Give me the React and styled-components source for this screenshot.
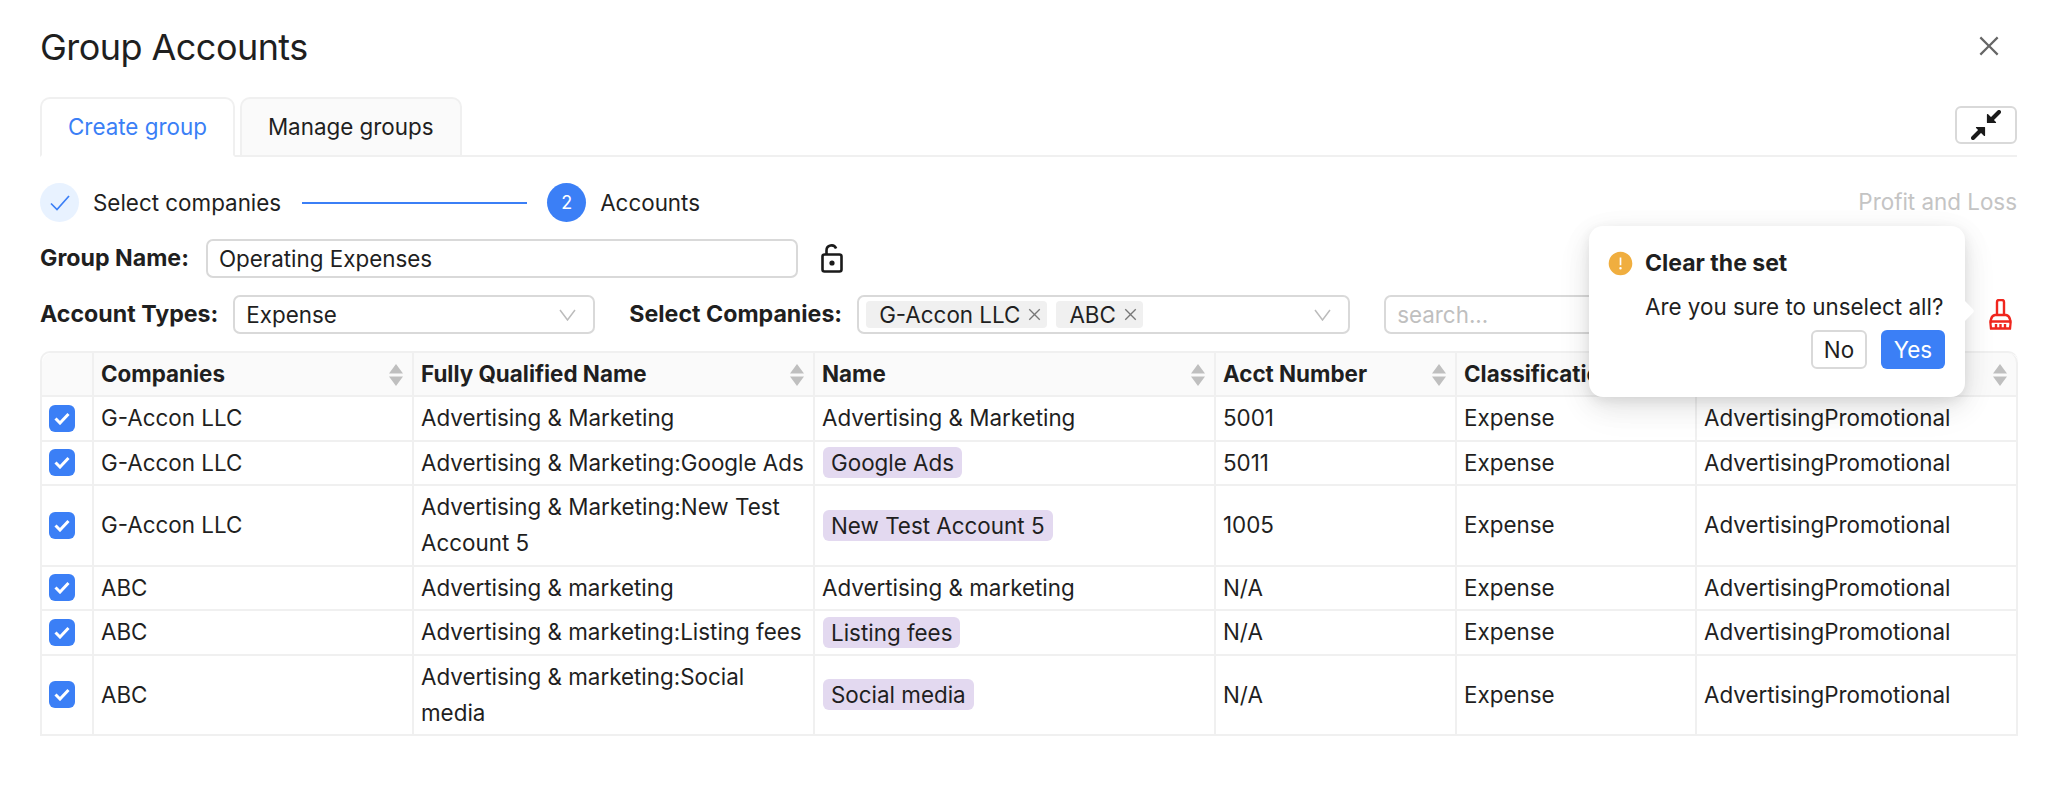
import React from "react";
import styled, { createGlobalStyle } from "styled-components";
import { AiFillExclamationCircle, AiOutlineClose } from "react-icons/ai";

const Global = createGlobalStyle`
  html, body { margin: 0; padding: 0; background: #fff; }
  body { font-family: Inter, "Liberation Sans", sans-serif; color: #1f1f1f; font-size: 22.4px; }
  * { box-sizing: border-box; }
`;
const Page = styled.div`position: relative; width: 2048px; height: 796px; padding: 0 31px 0 40px; overflow: hidden;`;
const TitleBar = styled.div`height: 97px; display: flex; justify-content: space-between; align-items: flex-start; padding-top: 24px;`;
const Title = styled.h1`margin: 0; font-size: 36px; line-height: 46px; font-weight: 400; letter-spacing: -0.55px; color: #1f1f1f;`;
const CloseBtn = styled.span`display: flex; margin-top: 8px; margin-right: 14px; color: #666; font-size: 28px;`;
const TabBar = styled.div`height: 60px; display: flex; align-items: flex-start; gap: 5px; border-bottom: 2px solid #f0f0f0;`;
const Tab = styled.div`
  height: 60px; padding: 0 26px 2px; display: flex; align-items: center; flex: none;
  border: 2px solid #f0f0f0; border-radius: 10px 10px 0 0;
  background: ${p => (p.$active ? "#fff" : "#fafafa")};
  color: ${p => (p.$active ? "#3b7ff6" : "#1f1f1f")};
  ${p => (p.$active ? "border-bottom-color:#fff;" : "")}
`;
const Collapse = styled.button`
  margin-left: auto; margin-top: 9px; width: 62px; height: 38px; padding: 0; background: #fff;
  border: 2px solid #d9d9d9; border-radius: 6px; display: flex; align-items: center; justify-content: center;
`;
const StepRow = styled.div`height: 39px; margin-top: 26px; display: flex; align-items: center;`;
const StepDot = styled.span`
  width: 39px; height: 39px; border-radius: 50%; display: flex; align-items: center; justify-content: center;
  font-size: 18px; flex: none;
  background: ${p => (p.$done ? "#e8f2ff" : "#3b7ff6")}; color: ${p => (p.$done ? "#3b7ff6" : "#fff")};
`;
const StepLabel = styled.span`margin-left: 14px;`;
const StepLine = styled.span`width: 225px; height: 2px; background: #3b7ff6; margin: 0 20px 0 21px;`;
const Muted = styled.span`margin-left: auto; color: #c4c4c4; margin-top: -2px;`;
const FormRow = styled.div`height: 39px; margin-top: 17px; display: flex; align-items: center;`;
const Label = styled.label`
  font-weight: 700; font-size: 23.2px; white-space: nowrap; position: relative; top: -1px;
  margin-right: ${p => p.$gap}px; margin-left: ${p => p.$left || 0}px;
`;
const Field = styled.div`
  width: ${p => p.$w}px; height: 39px; border: 2px solid #d9d9d9; border-radius: 7px; background: #fff;
  display: flex; align-items: center; padding: 0 11px; flex: none; color: ${p => (p.$muted ? "#bfbfbf" : "#1f1f1f")};
  margin-left: ${p => p.$left || 0}px;
`;
const Caret = styled.span`margin-left: auto; display: flex; margin-right: 6px;`;
const Lock = styled.span`display: flex; margin-left: 23px;`;
const TagItem = styled.span`
  height: 27px; display: inline-flex; align-items: center; gap: 6px; padding: 0 4px 0 13px; background: #f0f0f0;
  border-radius: 4px; margin-right: 9px; margin-left: ${p => (p.$first ? "-4px" : 0)};
  line-height: 27px;
`;
const TagX = styled.span`display: flex; color: #777; font-size: 17px;`;
const Broom = styled.span`display: flex; margin-left: auto; margin-right: 4px;`;
const Table = styled.table`
  width: 1976px; margin-top: 17px; border-collapse: separate; border-spacing: 0; table-layout: fixed;
  border-top: 2px solid #f0f0f0; border-left: 2px solid #f0f0f0; border-radius: 10px 10px 0 0;
`;
const Th = styled.th`
  height: 44px; padding: 0 7px 2px; background: #fafafa; text-align: left; font-weight: 700; position: relative;
  border-right: 2px solid #f0f0f0; border-bottom: 2px solid #f0f0f0;
  &:last-child { border-top-right-radius: 10px; }
  &:first-child { border-top-left-radius: 10px; }
`;
const Td = styled.td`
  padding: 3px 7px 3.5px; line-height: 36px; border-right: 2px solid #f0f0f0; border-bottom: 2px solid #f0f0f0;
`;
const CheckCell = styled.td`
  padding: 0 0 0 7px; border-right: 2px solid #f0f0f0; border-bottom: 2px solid #f0f0f0;
`;
const Check = styled.span`
  width: 26px; height: 27px; display: flex; align-items: center; justify-content: center; background: #3b7ff6; border-radius: 6px;
`;
const Pill = styled.span`display: block; width: fit-content; line-height: 31px; height: 31px; padding: 0 8px; margin-left: 1px; background: #e3d9f0; border-radius: 6px;`;
const Sort = styled.span`position: absolute; right: 8px; top: 11px; display: flex;`;
const Popover = styled.div`
  position: absolute; left: 1589px; top: 226px; width: 376px; height: 171px; background: #fff; border-radius: 14px;
  box-shadow: 0 8px 28px rgba(0,0,0,.09), 0 4px 12px rgba(0,0,0,.07), 0 12px 40px rgba(0,0,0,.05);
  padding: 16px 20px 0 18px;
  &::after { content: ""; position: absolute; right: -7px; top: 78px; width: 14px; height: 14px; background: #fff; transform: rotate(45deg); border-radius: 0 3px 0 0; }
`;
const PopTitle = styled.div`display: flex; align-items: center; gap: 11px; font-weight: 700; font-size: 23px; height: 28px; margin-top: 7px;`;
const Warn = styled.span`display: flex; color: #f0ae3f; font-size: 27px;`;
const PopText = styled.div`margin: 16px 0 0 38px; line-height: 28px; white-space: nowrap;`;
const PopActions = styled.div`display: flex; justify-content: flex-end; gap: 14px; margin-top: 9px;`;
const PopBtn = styled.button`
  height: 39px; padding: 0; font: inherit; width: ${p => (p.$primary ? 64 : 56)}px; border-radius: 6px;
  border: ${p => (p.$primary ? "none" : "2px solid #d9d9d9")};
  background: ${p => (p.$primary ? "#3b7ff6" : "#fff")}; color: ${p => (p.$primary ? "#fff" : "#1f1f1f")};
`;

const SortIcon = () => (
  <Sort><svg width="16" height="22" viewBox="0 0 16 22"><path d="M8 0l7 9.500H1z M8 22l7-9.500H1z" fill="#bfbfbf" /></svg></Sort>
);
const CompressIcon = () => (
  <svg width="30" height="30" viewBox="0 0 30 30" fill="#1a1a1a" stroke="#1a1a1a">
    <path d="M2 28l8-8" strokeWidth="4" strokeLinecap="round" />
    <path d="M5.500 17.500h8v8z" strokeWidth="1.200" strokeLinejoin="round" />
    <path d="M28 2l-8 8" strokeWidth="4" strokeLinecap="round" />
    <path d="M24.500 12.500h-8v-8z" strokeWidth="1.200" strokeLinejoin="round" />
  </svg>
);
const LockIcon = () => (
  <svg width="22" height="29" viewBox="0 0 22 29" fill="none" stroke="#1a1a1a" strokeWidth="2.600">
    <rect x="1.500" y="10.500" width="19" height="17" rx="2" />
    <path d="M5.500 10V6.500a5 5 0 0 1 9.600-2" />
    <circle cx="11" cy="19" r="2.600" fill="#1a1a1a" stroke="none" />
  </svg>
);
const StepCheck = () => (
  <svg width="20" height="16" viewBox="0 0 20 16" fill="none" stroke="#3b7ff6" strokeWidth="1.700"><path d="M1 8.500l6 6L19 1" /></svg>
);
const BoxCheck = () => (
  <svg width="16" height="13" viewBox="0 0 16 13" fill="none" stroke="#fff" strokeWidth="3"><path d="M1.500 6.500l4.500 4.500L14.500 2" /></svg>
);
const Chevron = () => (
  <svg width="17" height="12" viewBox="0 0 17 12" fill="none" stroke="#bcbcbc" strokeWidth="1.500"><path d="M1 1l7.500 10L16 1" /></svg>
);
const BroomIcon = () => (
  <svg width="25" height="31" viewBox="0 0 25 31" fill="none" stroke="#f0261e" strokeWidth="2.400">
    <path d="M9 16V3a2 2 0 0 1 2-2h3a2 2 0 0 1 2 2v13" />
    <path d="M3 29.500c-1.400-7 0-13 4-13.500h11c4 .5 5.400 6.500 4 13.500z" />
    <path d="M1.500 22.500h22M8 25v4M12.500 25v4M17 25v4" />
  </svg>
);

const columns = [
  ["", 52], ["Companies", 320], ["Fully Qualified Name", 401], ["Name", 401],
  ["Acct Number", 241], ["Classification", 240], ["Account Sub Type", 321],
];
const rows = [
  ["G-Accon LLC", "Advertising & Marketing", "Advertising & Marketing", false, "5001"],
  ["G-Accon LLC", "Advertising & Marketing:Google Ads", "Google Ads", true, "5011"],
  ["G-Accon LLC", "Advertising & Marketing:New Test Account 5", "New Test Account 5", true, "1005"],
  ["ABC", "Advertising & marketing", "Advertising & marketing", false, "N/A"],
  ["ABC", "Advertising & marketing:Listing fees", "Listing fees", true, "N/A"],
  ["ABC", "Advertising & marketing:Social media", "Social media", true, "N/A"],
];

export default function App() {
  return (
    <Page>
      <Global />
      <TitleBar>
        <Title>Group Accounts</Title>
        <CloseBtn><AiOutlineClose /></CloseBtn>
      </TitleBar>
      <TabBar>
        <Tab $active>Create group</Tab>
        <Tab>Manage groups</Tab>
        <Collapse aria-label="Collapse"><CompressIcon /></Collapse>
      </TabBar>
      <StepRow>
        <StepDot $done><StepCheck /></StepDot>
        <StepLabel>Select companies</StepLabel>
        <StepLine />
        <StepDot>2</StepDot>
        <StepLabel>Accounts</StepLabel>
        <Muted>Profit and Loss</Muted>
      </StepRow>
      <FormRow>
        <Label $gap={17}>Group Name:</Label>
        <Field $w={592}>Operating Expenses</Field>
        <Lock><LockIcon /></Lock>
      </FormRow>
      <FormRow>
        <Label $gap={15}>Account Types:</Label>
        <Field $w={362}>Expense<Caret><Chevron /></Caret></Field>
        <Label $left={34} $gap={15}>Select Companies:</Label>
        <Field $w={493}>
          <TagItem $first>G-Accon LLC<TagX><AiOutlineClose /></TagX></TagItem>
          <TagItem>ABC<TagX><AiOutlineClose /></TagX></TagItem>
          <Caret><Chevron /></Caret>
        </Field>
        <Field $w={250} $left={34} $muted>search...</Field>
        <Broom><BroomIcon /></Broom>
      </FormRow>
      <Table>
        <colgroup>{columns.map(([n, w], i) => <col key={i} width={w} />)}</colgroup>
        <thead>
          <tr>
            {columns.map(([n], i) => (
              <Th key={i}>{n}{i > 0 && <SortIcon />}</Th>
            ))}
          </tr>
        </thead>
        <tbody>
          {rows.map((r, i) => (
            <tr key={i}>
              <CheckCell><Check><BoxCheck /></Check></CheckCell>
              <Td>{r[0]}</Td>
              <Td>{r[1]}</Td>
              <Td>{r[3] ? <Pill>{r[2]}</Pill> : r[2]}</Td>
              <Td>{r[4]}</Td>
              <Td>Expense</Td>
              <Td>AdvertisingPromotional</Td>
            </tr>
          ))}
        </tbody>
      </Table>
      <Popover>
        <PopTitle><Warn><AiFillExclamationCircle /></Warn>Clear the set</PopTitle>
        <PopText>Are you sure to unselect all?</PopText>
        <PopActions>
          <PopBtn>No</PopBtn>
          <PopBtn $primary>Yes</PopBtn>
        </PopActions>
      </Popover>
    </Page>
  );
}
